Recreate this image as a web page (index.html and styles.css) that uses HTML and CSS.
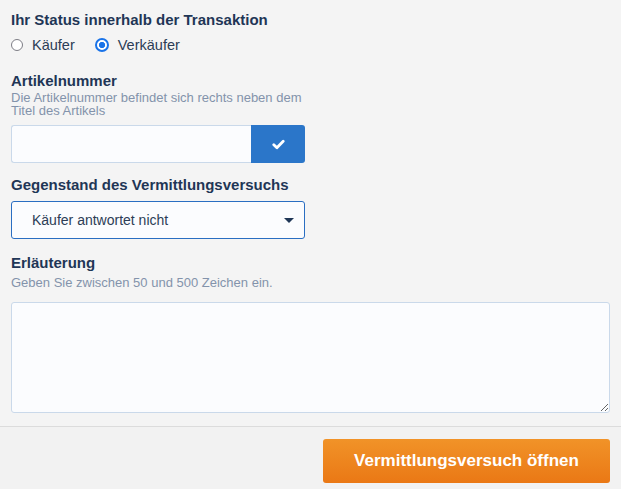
FILE: index.html
```html
<!DOCTYPE html>
<html lang="de">
<head>
    <meta charset="utf-8">
    <title>Vermittlungsversuch</title>
    <link rel="stylesheet" href="styles.css">
</head>
<body>
    <form class="dispute">
        <div class="label">Ihr Status innerhalb der Transaktion</div>
        <div class="radios">
            <label class="radio"><span class="dot"></span>Käufer</label>
            <label class="radio checked"><span class="dot"></span>Verkäufer</label>
        </div>

        <div class="label label-article">Artikelnummer</div>
        <div class="hint hint-article">Die Artikelnummer befindet sich rechts neben dem Titel des Artikels</div>
        <div class="input-group">
            <input type="text" class="text-input">
            <button type="button" class="check-btn">
                <svg width="13" height="11" viewBox="0 0 13 11"><path d="M1.8 5.8 L4.9 8.7 L11.2 2.2" fill="none" stroke="#fff" stroke-width="2.8" stroke-linecap="round" stroke-linejoin="round"/></svg>
            </button>
        </div>

        <div class="label label-subject">Gegenstand des Vermittlungsversuchs</div>
        <div class="select">
            <span>Käufer antwortet nicht</span>
            <span class="caret"></span>
        </div>

        <div class="label label-note">Erläuterung</div>
        <div class="hint hint-note">Geben Sie zwischen 50 und 500 Zeichen ein.</div>
        <textarea class="textarea"></textarea>
    </form>
    <div class="footer">
        <button type="button" class="submit">Vermittlungsversuch öffnen</button>
    </div>
</body>
</html>
```

FILE: styles.css
```css
body,html{padding:0;margin:0;}
body{
	background:#f4f4f4;
	font-family:"Liberation Sans",Arial,sans-serif;
	color:#1f3554;
	width:621px;
	height:489px;
	overflow:hidden;
}
.dispute{padding:11px 11px 13px 11px;}

.label{font-size:15px;font-weight:bold;line-height:18px;color:#1f3656;}
.hint{font-size:13px;line-height:13px;color:#8393ab;}

.radios{display:flex;gap:20px;margin-top:7px;height:18px;align-items:center;}
.radio{display:flex;align-items:center;font-size:14.5px;line-height:18px;color:#2c3d56;}
.dot{
	width:10px;height:10px;border-radius:50%;
	border:1.5px solid #7d7d85;background:#fff;
	margin-right:9px;box-sizing:content-box;
}
.radio.checked .dot{
	border:2px solid #1a73e8;width:10px;height:10px;
	background:radial-gradient(circle,#1a73e8 0 2.8px,#fff 3.4px);
}

.label-article{margin-top:18px;}
.hint-article{margin-top:1px;width:294px;}
.input-group{display:flex;width:294px;height:38px;margin-top:8px;}
.text-input{
	flex:1;border:1px solid #cad9ea;border-right:none;
	border-radius:3px 0 0 3px;background:#fbfcfe;
	margin:0;padding:0 8px;outline:none;
}
.check-btn{
	width:54px;border:none;background:#2b76c9;
	border-radius:0 3px 3px 0;margin:0;padding:0;
	display:flex;align-items:center;justify-content:center;
}

.label-subject{margin-top:13px;}
.select{
	display:flex;align-items:center;justify-content:space-between;
	width:294px;height:38px;box-sizing:border-box;margin-top:7px;
	border:1px solid #2a6ec2;border-radius:3px;background:#fbfcfe;
	padding:0 10px 0 20px;font-size:14px;color:#2c3d56;
}
.caret{
	width:0;height:0;
	border-left:5px solid transparent;border-right:5px solid transparent;
	border-top:5px solid #1f3656;
}

.label-note{margin-top:15px;}
.hint-note{margin-top:4px;}
.textarea{
	display:block;width:599px;height:111px;box-sizing:border-box;
	margin:13px 0 0 0;border:1px solid #cad9ea;border-radius:3px;
	background:#fbfcfe;resize:vertical;outline:none;
}

.footer{
	border-top:1px solid #dcdcdc;background:#f2f2f2;
	display:flex;justify-content:flex-end;
	padding:12px 11px 20px 0;
}
.submit{
	width:287px;height:44px;border:none;border-radius:3px;
	background:linear-gradient(#f19328,#ea7815);
	color:#fff;font-family:"Liberation Sans",Arial,sans-serif;
	font-size:17px;font-weight:bold;
}
```
